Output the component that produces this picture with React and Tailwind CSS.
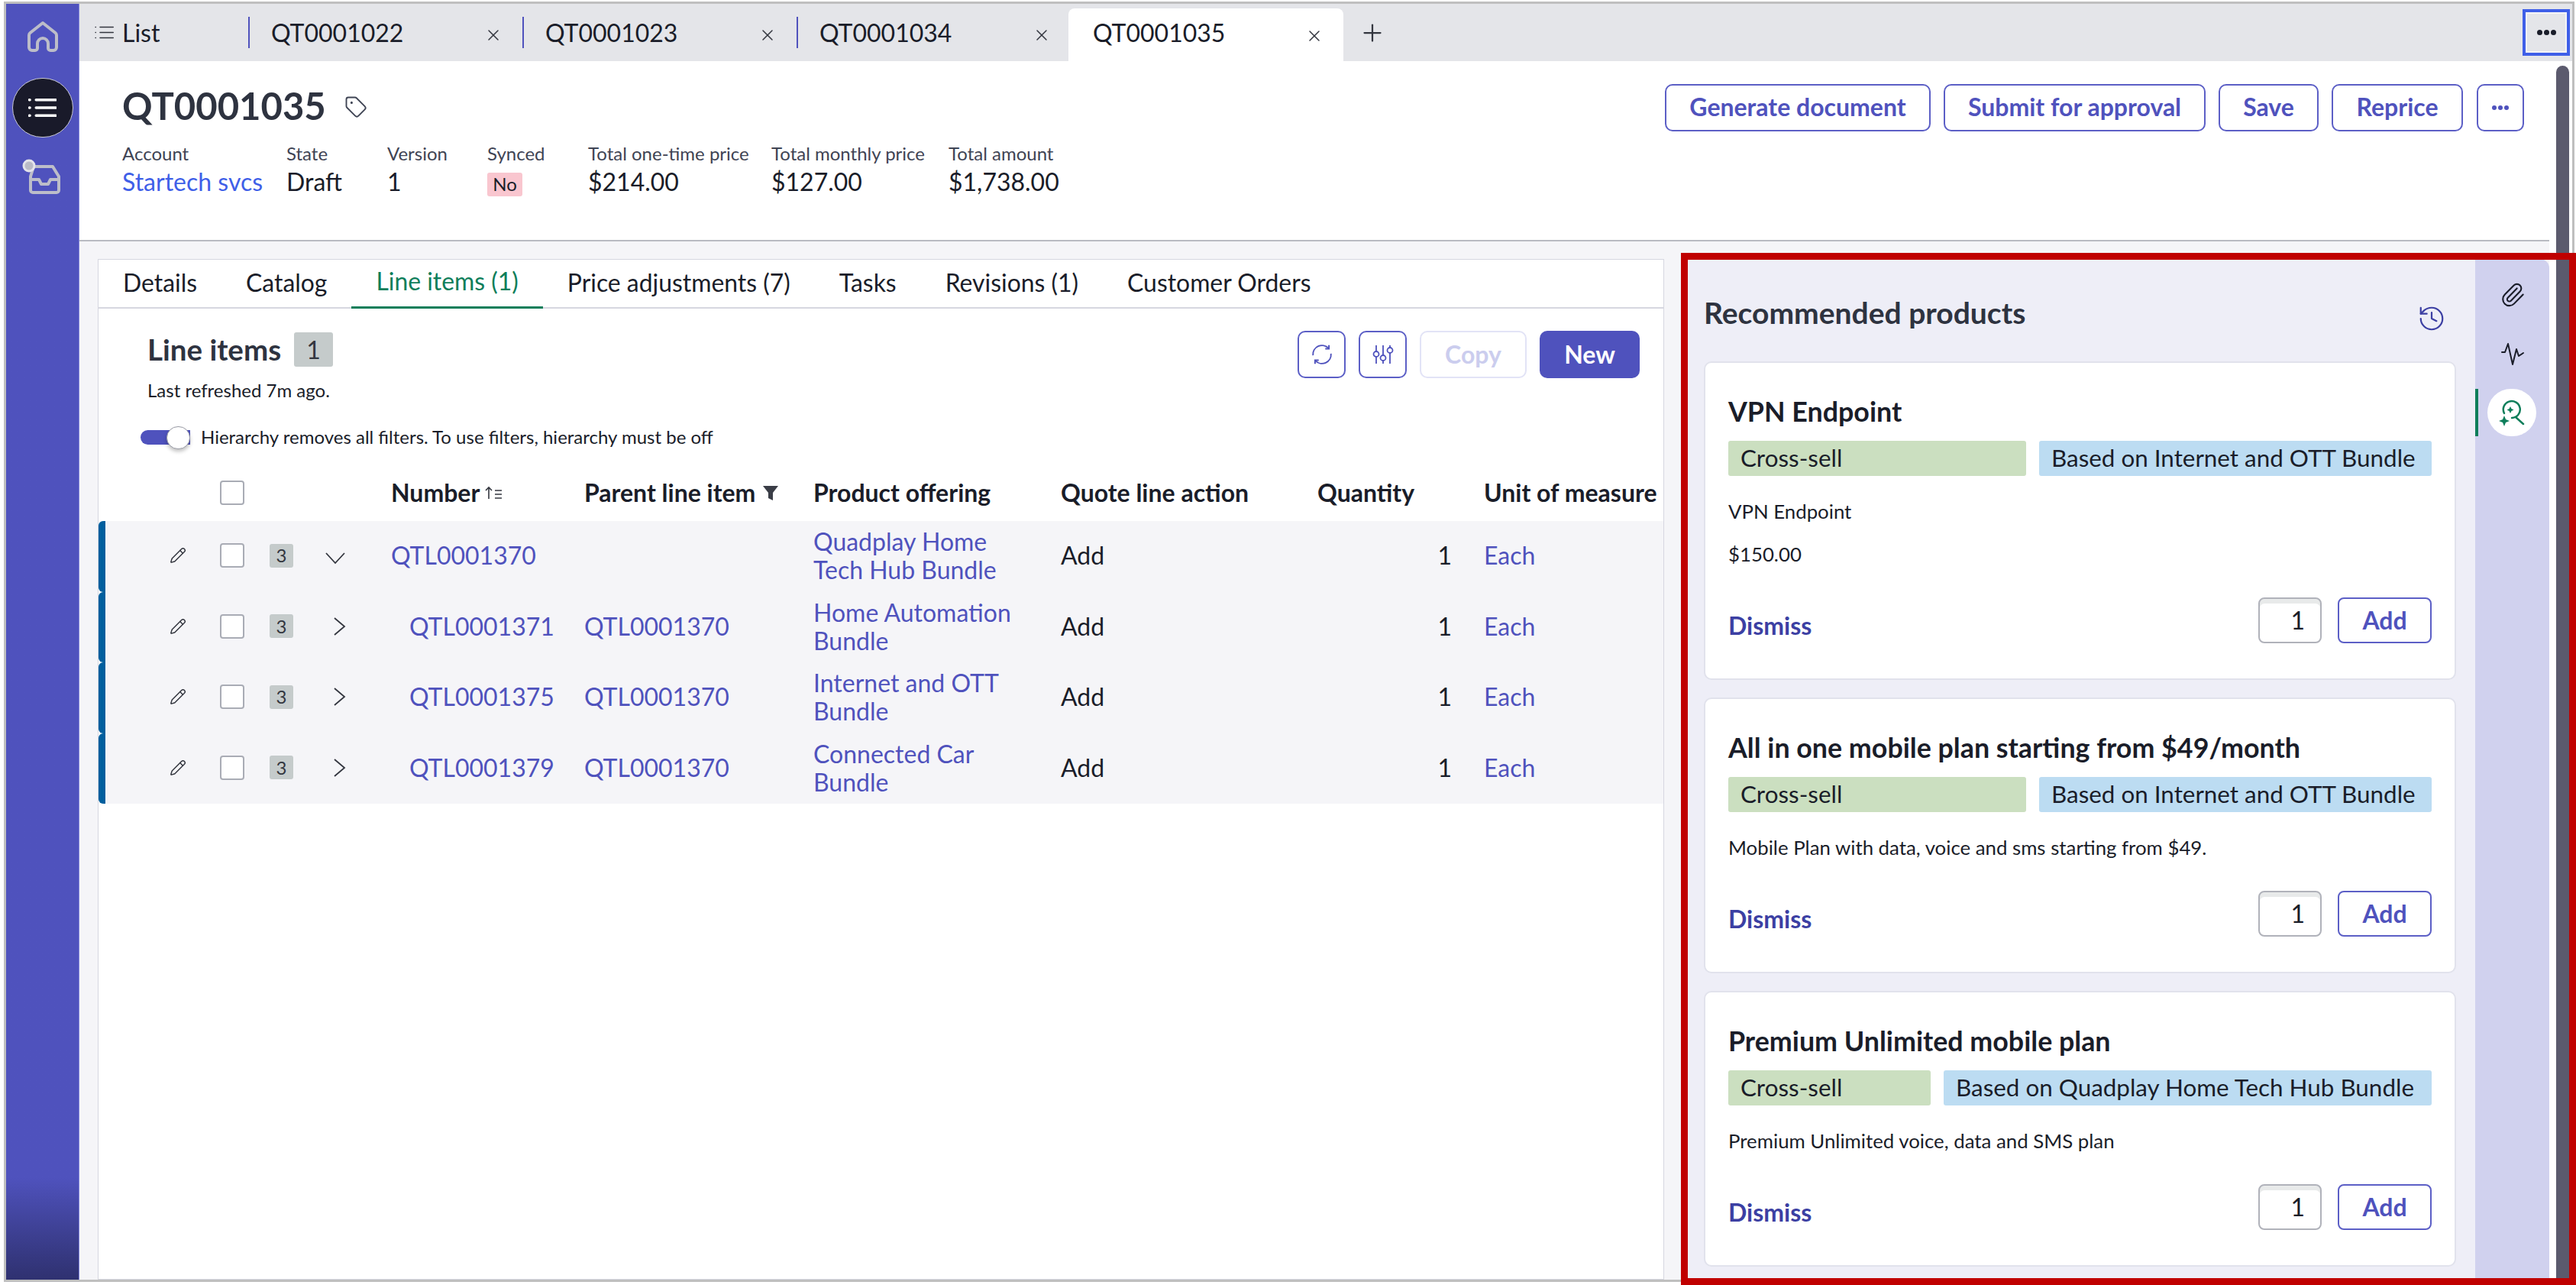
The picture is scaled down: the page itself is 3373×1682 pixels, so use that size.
import { History, Paperclip, Pencil, Plus, Tag, X } from 'lucide-react'

const quoteTabs = ['QT0001022', 'QT0001023', 'QT0001034']

const summary = [
  { label: 'Account', value: 'Startech svcs', width: 'w-[215px]', link: true },
  { label: 'State', value: 'Draft', width: 'w-[132px]' },
  { label: 'Version', value: '1', width: 'w-[131px]' },
  { label: 'Synced', badge: 'No', width: 'w-[132px]' },
  { label: 'Total one-time price', value: '$214.00', width: 'w-[240px]' },
  { label: 'Total monthly price', value: '$127.00', width: 'w-[232px]' },
  { label: 'Total amount', value: '$1,738.00', width: 'w-[240px]' },
]

const recordTabs = [
  { label: 'Details' },
  { label: 'Catalog' },
  { label: 'Line items (1)', active: true },
  { label: 'Price adjustments (7)' },
  { label: 'Tasks' },
  { label: 'Revisions (1)' },
  { label: 'Customer Orders' },
]

const lineItems = [
  { number: 'QTL0001370', offering: ['Quadplay Home', 'Tech Hub Bundle'], open: true },
  { number: 'QTL0001371', parent: 'QTL0001370', offering: ['Home Automation', 'Bundle'] },
  { number: 'QTL0001375', parent: 'QTL0001370', offering: ['Internet and OTT', 'Bundle'] },
  { number: 'QTL0001379', parent: 'QTL0001370', offering: ['Connected Car', 'Bundle'] },
]

const columns = 'grid grid-cols-[150px_65px_70px_89px_253px_300px_324px_336px_176px_1fr] items-center'

function Dots({ color, size = 'w-[7px] h-[7px]' }) {
  return (
    <span className="flex gap-[2px]">
      <span className={`${size} rounded-full ${color}`} />
      <span className={`${size} rounded-full ${color}`} />
      <span className={`${size} rounded-full ${color}`} />
    </span>
  )
}

function HomeIcon() {
  return (
    <svg width="44" height="42" viewBox="0 0 44 42" fill="none" stroke="#bcbdc9" strokeWidth="4" strokeLinejoin="round">
      <path d="M8 39a4 4 0 0 1-4-4V19a4 4 0 0 1 1.500-3L22 3l16.500 13a4 4 0 0 1 1.500 3v16a4 4 0 0 1-4 4h-4a3 3 0 0 1-3-3v-6a7 7 0 0 0-14 0v6a3 3 0 0 1-3 3z" />
    </svg>
  )
}

function InboxIcon() {
  return (
    <svg width="52" height="46" viewBox="0 0 52 46" fill="none" stroke="#bcbdc9" strokeWidth="4" strokeLinejoin="round">
      <path d="M15 10h25l8 13v18a3 3 0 0 1-3 3H14a3 3 0 0 1-3-3V23z" />
      <path d="M11 27h11l3 6h9l3-6h11" />
      <circle cx="9" cy="9" r="7" fill="#b9bac6" stroke="#e3e3ea" strokeWidth="3" />
    </svg>
  )
}

function ListGlyph({ color, width, className }) {
  return (
    <svg viewBox="0 0 36 26" fill="none" stroke={color} strokeWidth={width} strokeLinecap="round" className={className}>
      <path d="M10 3h25M10 13h25M10 23h25" />
      <path d="M1.500 3h.5M1.500 13h.5M1.500 23h.5" />
    </svg>
  )
}

function RefreshIcon() {
  return (
    <svg width="30" height="30" viewBox="0 0 28 28" fill="none" stroke="#4f52bd" strokeWidth="1.800">
      <path d="M3 15A11 11 0 0 1 22 6.500" />
      <path d="M25 13A11 11 0 0 1 6 21.500" />
      <path d="M22.500 2.500V7H18" />
      <path d="M5.500 25.500V21H10" />
    </svg>
  )
}

function SlidersIcon() {
  return (
    <svg width="30" height="26" viewBox="0 0 30 26" fill="none" stroke="#4f52bd" strokeWidth="1.800">
      <path d="M6 1v8M6 16v9M15 1v13M15 21v4M24 1v3M24 11v14" />
      <circle cx="6" cy="12.500" r="3.500" />
      <circle cx="15" cy="17.500" r="3.500" />
      <circle cx="24" cy="7.500" r="3.500" />
    </svg>
  )
}

function SortIcon() {
  return (
    <svg width="24" height="18" viewBox="0 0 24 18" fill="none" stroke="#33363f" strokeWidth="1.600">
      <path d="M5 17V2M1 6l4-4 4 4" />
      <path d="M13 6h9M13 11h9M13 16h9" />
    </svg>
  )
}

function FunnelIcon() {
  return (
    <svg width="20" height="20" viewBox="0 0 20 20" fill="#3a3d46">
      <path d="M0 1h20l-7 9v10l-6-3v-7z" />
    </svg>
  )
}

function PulseIcon() {
  return (
    <svg width="32" height="32" viewBox="0 0 32 32" fill="none" stroke="#1a1d29" strokeWidth="2" strokeLinejoin="round" strokeLinecap="round">
      <path d="M2 14h4l4-11 6 27 5-20 3 9 6-4" />
    </svg>
  )
}

function SparkleSearchIcon() {
  return (
    <svg width="36" height="36" viewBox="0 0 36 36" fill="none" stroke="#0e7e5a" strokeWidth="2.500" strokeLinecap="round">
      <path d="M8 19a11 11 0 1 1 10 6M23 24l10 9" />
      <path d="M16 10l1.500 3 3 1.500-3 1.500-1.500 3-1.500-3-3-1.500 3-1.500z" fill="#0e7e5a" stroke="none" />
      <path d="M8 22l2 5 5 2-5 2-2 5-2-5-5-2 5-2z" fill="#0e7e5a" stroke="none" />
    </svg>
  )
}

function RowChevron({ open }) {
  if (open) {
    return (
      <svg width="26" height="16" viewBox="0 0 26 16" fill="none" stroke="#33363f" strokeWidth="1.800" className="ml-[3px] mt-[8px]">
        <path d="M1 1l12 13L25 1" />
      </svg>
    )
  }
  return (
    <svg width="16" height="24" viewBox="0 0 16 24" fill="none" stroke="#33363f" strokeWidth="1.800" className="ml-[14px]">
      <path d="M1 1l13 11L1 23" />
    </svg>
  )
}

function QuoteTab({ name }) {
  return (
    <div className="w-[359px] h-full flex items-center">
      <span className="w-[2px] h-[41px] bg-[#4f52bd]" />
      <span className="ml-[28px] text-[32px] text-[#1a1d29]">{name}</span>
      <X size={24} strokeWidth={1.500} className="ml-auto mr-[26px] mt-[6px] text-[#33363f]" />
    </div>
  )
}

function OutlineButton({ children, width }) {
  return (
    <button className={`${width} h-[62px] border-2 border-[#5c5fc6] rounded-[10px] bg-white text-[32px] leading-[56px] font-bold text-[#4f52bd] flex items-start justify-center`}>
      {children}
    </button>
  )
}

function Checkbox() {
  return <span className="block w-[32px] h-[32px] bg-white border-2 border-[#a9acb5] rounded-[4px]" />
}

function LineItemRow({ item }) {
  return (
    <div className={`${columns} h-[92.5px] pb-[2px] bg-[#f5f5f8] border-l-[9px] border-[#005f9e] rounded-l-[6px] text-[32px] text-[#1a1d29]`}>
      <Pencil size={22} strokeWidth={1.600} className="ml-[84px] text-[#33363f]" />
      <Checkbox />
      <span className="w-[31px] h-[31px] bg-[#c5cbcb] rounded-[3px] text-[24px] text-[#33363f] flex items-center justify-center">3</span>
      <span><RowChevron open={item.open} /></span>
      <a className={`text-[#4f52bd] ${item.open ? '' : 'pl-[24px]'}`}>{item.number}</a>
      <a className="text-[#4f52bd]">{item.parent}</a>
      <a className="text-[#4f52bd] leading-[37px]">
        {item.offering[0]}
        <br />
        {item.offering[1]}
      </a>
      <span>Add</span>
      <span className="text-right">1</span>
      <a className="pl-[42px] text-[#4f52bd]">Each</a>
    </div>
  )
}

function RecommendCard({ title, basedOn, lines, greenWidth, className }) {
  return (
    <div className={`bg-white border-2 border-[#e1e2ec] rounded-[10px] px-[30px] ${className}`}>
      <h3 className="text-[35.800px] leading-[40px] font-bold text-[#1a1d29]">{title}</h3>
      <div className="flex gap-[17px] mt-[18px] h-[46px] text-[31.400px] text-[#1a1d29]">
        <span className={`${greenWidth} bg-[#cbdfc0] rounded-[3px] pl-[16px] flex items-center`}>Cross-sell</span>
        <span className="flex-1 bg-[#bcdcf2] rounded-[3px] pl-[16px] flex items-center whitespace-nowrap">{basedOn}</span>
      </div>
      <div className="mt-[31px] flex flex-col gap-[26px] text-[25.800px] leading-[30px] text-[#1a1d29]">
        {lines.map((line) => <p key={line}>{line}</p>)}
      </div>
      <div className="mt-[42px] flex justify-between items-start">
        <a className="mt-[18px] text-[32px] leading-[38px] font-bold text-[#3c3fa3]">Dismiss</a>
        <div className="flex gap-[21px]">
          <div className="w-[83px] h-[60px] border-2 border-[#b0b2ba] rounded-[8px] bg-white shadow-[inset_0_6px_0_#e8eaea] text-[32px] text-[#1a1d29] flex items-center justify-end pr-[20px]">1</div>
          <button className="w-[123px] h-[60px] border-2 border-[#5c5fc6] rounded-[8px] bg-white text-[32px] leading-[50px] font-bold text-[#4f52bd]">Add</button>
        </div>
      </div>
    </div>
  )
}

export default function App() {
  return (
    <div className="relative w-[3373px] h-[1682px] overflow-hidden bg-white pl-[5px] pt-[2px] pr-[2px] pb-[4px] font-[Lato,sans-serif]">
      <div className="h-full flex border-[3px] border-[#bfbfbf]">

        {/* nav rail */}
        <aside className="w-[96px] border-r border-[#8387dc] bg-linear-to-b from-[#4f52bd] from-[92%] to-[#2f3170] flex flex-col items-center">
          <div className="mt-[22px] ml-[1px]"><HomeIcon /></div>
          <div className="mt-[33px] w-[80px] h-[78px] rounded-full bg-[#191a2a] border border-[#c9c9d2] flex items-center justify-center">
            <ListGlyph color="#ffffff" width={3.500} className="w-[37px] h-[28px]" />
          </div>
          <div className="mt-[28px] ml-[-2px]"><InboxIcon /></div>
        </aside>

        <div className="flex-1 min-w-0 flex flex-col">
          {/* open tabs */}
          <div className="h-[75px] bg-[#e4e5e9] flex items-center">
            <div className="w-[221px] h-full pl-[20px] flex items-center gap-[11px]">
              <ListGlyph color="#33363f" width={2} className="w-[25px] h-[19px]" />
              <span className="text-[32px] text-[#1a1d29]">List</span>
            </div>
            {quoteTabs.map((name) => <QuoteTab key={name} name={name} />)}
            <div className="w-[360px] h-[69px] mt-[6px] ml-[-3px] bg-white rounded-t-[8px] pl-[32px] pb-[5px] flex items-center">
              <span className="text-[32px] text-[#1a1d29]">QT0001035</span>
              <X size={24} strokeWidth={1.500} className="ml-auto mr-[26px] mt-[8px] text-[#33363f]" />
            </div>
            <Plus size={36} strokeWidth={1.500} className="ml-[20px] text-[#33363f]" />
            <button className="ml-auto mr-[3px] w-[62px] h-[61px] border-4 border-[#3f5fe8] shadow-[inset_0_0_0_2px_#f4f4f7] flex items-center justify-center">
              <Dots color="bg-[#1a1d29]" />
            </button>
          </div>

          <div className="flex-1 min-h-0 flex">
            <div className="w-[3234px] flex flex-col">
              {/* record header */}
              <header className="h-[236px] bg-white border-b-2 border-[#b9bbc2] pl-[56px] pr-[33px] flex justify-between">
                <div className="pt-[30px]">
                  <div className="flex items-center h-[56px]">
                    <h1 className="text-[49px] leading-[56px] font-bold text-[#2e3340]">QT0001035</h1>
                    <Tag size={30} strokeWidth={1.500} className="ml-[24px] mt-[4px] text-[#3f4454]" />
                  </div>
                  <div className="flex mt-[20px]">
                    {summary.map((field) => (
                      <div key={field.label} className={field.width}>
                        <p className="text-[24px] leading-[30px] text-[#3f4454]">{field.label}</p>
                        <div className="mt-[3px] h-[38px] text-[32px] leading-[38px] text-[#1a1d29]">
                          {field.badge ? (
                            <span className="inline-flex items-center justify-center w-[46px] h-[31px] mt-[6px] rounded-[3px] bg-[#f9c6cf] text-[24px]">{field.badge}</span>
                          ) : field.link ? (
                            <a className="text-[#3f5fe8]">{field.value}</a>
                          ) : field.value}
                        </div>
                      </div>
                    ))}
                  </div>
                </div>
                <div className="pt-[30px] flex gap-[17px] items-start">
                  <OutlineButton width="w-[348px]">Generate document</OutlineButton>
                  <OutlineButton width="w-[343px]">Submit for approval</OutlineButton>
                  <OutlineButton width="w-[131px]">Save</OutlineButton>
                  <OutlineButton width="w-[172px]">Reprice</OutlineButton>
                  <OutlineButton width="w-[62px] ml-[1px]"><span className="h-full flex items-center"><Dots color="bg-[#4f52bd]" size="w-[6px] h-[6px]" /></span></OutlineButton>
                </div>
              </header>

              <div className="flex-1 min-h-0 bg-[#f5f5f8] pl-[24px] pt-[23px] flex">
                {/* line items card */}
                <section className="w-[2051px] bg-white border border-[#d6d7e0]">
                  <nav className="h-[64px] border-b-2 border-[#d6d7e0] flex text-[31.900px] text-[#1a1d29]">
                    {recordTabs.map((tab) => (
                      <span
                        key={tab.label}
                        className={`px-[32px] h-[64px] pb-[3px] flex items-center ${tab.active ? 'text-[#0e7e5a] border-b-[3px] border-[#0e7e5a]' : ''}`}
                      >
                        {tab.label}
                      </span>
                    ))}
                  </nav>

                  <div className="pt-[29px] pl-[64px] pr-[31px] flex justify-between items-start">
                    <div className="pt-[2px]">
                      <div className="flex items-center h-[45px] gap-[17px]">
                        <h2 className="text-[38.500px] font-bold text-[#2e3340]">Line items</h2>
                        <span className="w-[51px] h-[45px] rounded-[3px] bg-[#c5cbcb] text-[32px] text-[#33363f] flex items-center justify-center">1</span>
                      </div>
                      <p className="mt-[16px] text-[24px] leading-[30px] text-[#1a1d29]">Last refreshed 7m ago.</p>
                    </div>
                    <div className="flex gap-[17px]">
                      <button className="w-[63px] h-[62px] border-2 border-[#5c5fc6] rounded-[10px] flex items-center justify-center">
                        <RefreshIcon />
                      </button>
                      <button className="w-[63px] h-[62px] border-2 border-[#5c5fc6] rounded-[10px] flex items-center justify-center">
                        <SlidersIcon />
                      </button>
                      <button className="w-[140px] h-[62px] border-2 border-[#e2e3f6] rounded-[10px] text-[32px] leading-[52px] font-bold text-[#cbcdee]">Copy</button>
                      <button className="w-[131px] h-[62px] rounded-[10px] bg-[#4f52bd] text-[32px] leading-[56px] font-bold text-white">New</button>
                    </div>
                  </div>

                  <div className="mt-[31px] h-[30px] pl-[55px] flex items-center">
                    <span className="relative block w-[65px] h-[19px] rounded-l-full bg-[#4f52bd]">
                      <span className="absolute right-0 top-[-5px] w-[31px] h-[30px] rounded-full bg-white border border-[#9a9ca6] shadow-[0_3px_5px_rgba(0,0,0,0.25)]" />
                    </span>
                    <p className="ml-[14px] text-[24px] text-[#1a1d29]">Hierarchy removes all filters. To use filters, hierarchy must be off</p>
                  </div>

                  <div className={`${columns} mt-[34px] h-[46px] pl-[9px] text-[32px] font-bold text-[#1a1d29]`}>
                    <span />
                    <Checkbox />
                    <span />
                    <span />
                    <span className="flex items-center gap-[7px]">Number <SortIcon /></span>
                    <span className="flex items-center gap-[10px]">Parent line item <FunnelIcon /></span>
                    <span>Product offering</span>
                    <span>Quote line action</span>
                    <span>Quantity</span>
                    <span className="pl-[42px] whitespace-nowrap">Unit of measure</span>
                  </div>

                  <div className="mt-[15px]">
                    {lineItems.map((item) => <LineItemRow key={item.number} item={item} />)}
                  </div>
                </section>

                {/* recommendations panel */}
                <section className="ml-[26px] flex-1 min-w-0 flex rounded-tr-[12px] overflow-hidden">
                  <div className="flex-1 min-w-0 bg-[#eeeef7] pl-[26px] pr-[25px]">
                    <div className="pt-[48px] h-[134px] flex justify-between">
                      <h2 className="text-[39px] leading-[44px] font-bold text-[#2e3340]">Recommended products</h2>
                      <History size={38} strokeWidth={1.400} className="mt-[11px] mr-[13px] text-[#3c3fa3]" />
                    </div>
                    <div className="flex flex-col gap-[23px]">
                      <RecommendCard
                        title="VPN Endpoint"
                        basedOn="Based on Internet and OTT Bundle"
                        lines={['VPN Endpoint', '$150.00']}
                        greenWidth="w-[390px]"
                        className="pt-[44px] h-[417px]"
                      />
                      <RecommendCard
                        title="All in one mobile plan starting from $49/month"
                        basedOn="Based on Internet and OTT Bundle"
                        lines={['Mobile Plan with data, voice and sms starting from $49.']}
                        greenWidth="w-[390px]"
                        className="pt-[44px] h-[361px]"
                      />
                      <RecommendCard
                        title="Premium Unlimited mobile plan"
                        basedOn="Based on Quadplay Home Tech Hub Bundle"
                        lines={['Premium Unlimited voice, data and SMS plan']}
                        greenWidth="w-[265px]"
                        className="pt-[44px] h-[361px]"
                      />
                    </div>
                  </div>
                  <div className="w-[97px] bg-[#d0d1ee] flex flex-col">
                    <Paperclip size={34} strokeWidth={1.500} className="mt-[30px] mx-auto text-[#1a1d29]" />
                    <div className="mt-[44px] mx-auto"><PulseIcon /></div>
                    <div className="mt-[30px] flex">
                      <span className="w-[4px] h-[62px] bg-[#0e7e5a]" />
                      <span className="ml-[12px] w-[64px] h-[62px] rounded-full bg-white flex items-center justify-center">
                        <SparkleSearchIcon />
                      </span>
                    </div>
                  </div>
                </section>
              </div>
            </div>

            {/* page scrollbar */}
            <div className="ml-[9px] mt-[6px] w-[17px] rounded-t-full bg-[#5b5a6d]" />
          </div>
        </div>
      </div>

      {/* annotation box drawn over the screenshot */}
      <div className="absolute left-[2201px] top-[331px] w-[1172px] h-[1351px] border-[9px] border-[#c00000] pointer-events-none" />
    </div>
  )
}
